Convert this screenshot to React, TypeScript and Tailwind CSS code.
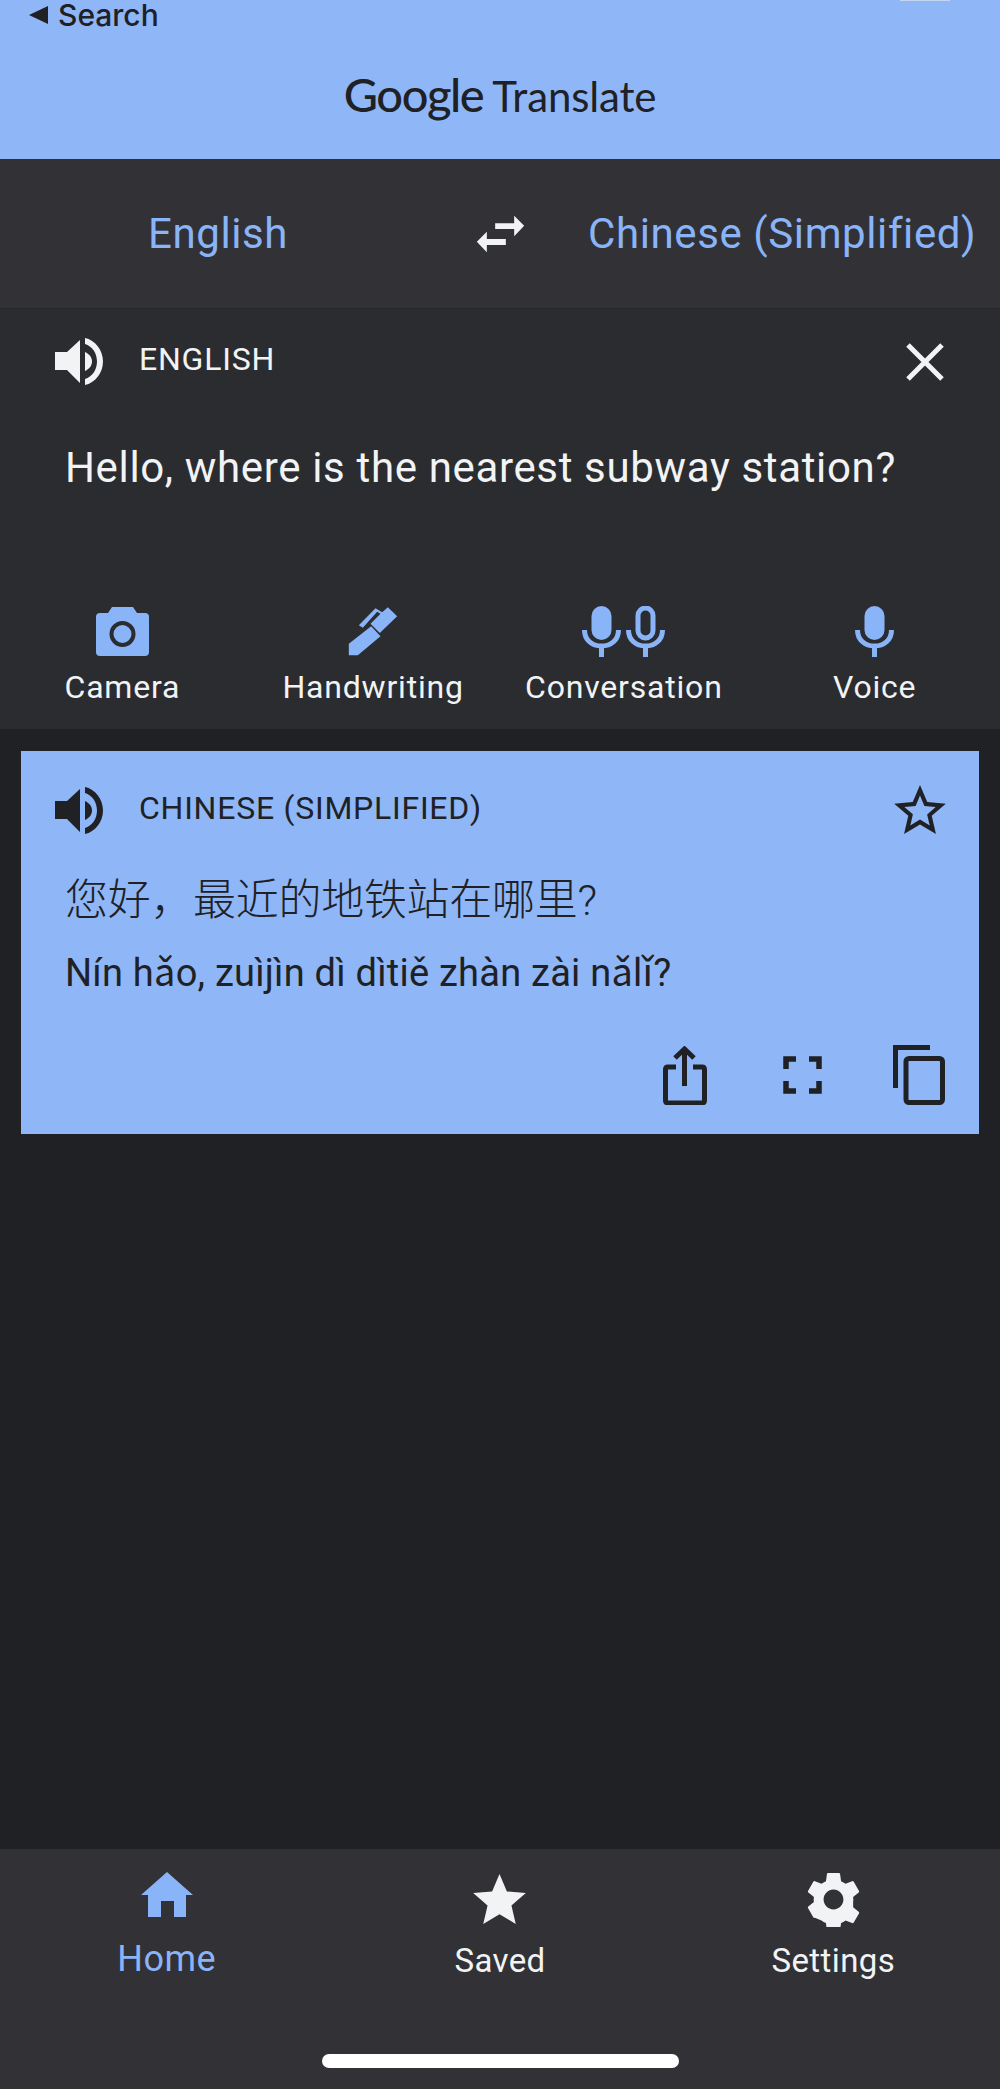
function Speaker({ className }: { className: string }) {
  return (
    <svg viewBox="0 0 48 47" className={className} fill="currentColor">
      <path d="M0 14H12L25 2V45L12 32H0Z" />
      <path d="M30 14C34 16 37 19 37 23.5C37 28 34 31 30 33Z" />
      <path d="M30 0C40 2 48 12 48 23.5S40 45 30 47V41C37 39 42 32 42 23.5S37 8 30 6Z" />
    </svg>
  );
}

function Mic({ outline }: { outline?: boolean }) {
  return (
    <svg viewBox="0 0 39 51" className="w-[39px] h-[51px] text-[#8ab4f8]">
      {outline ? (
        <rect x="12" y="2" width="15" height="30" rx="7.5" fill="none" stroke="currentColor" strokeWidth="5" />
      ) : (
        <rect x="9.5" y="0" width="20" height="34" rx="10" fill="currentColor" />
      )}
      <path d="M2.5 24C2.5 34 10 40 19.5 40S36.5 34 36.5 24" fill="none" stroke="currentColor" strokeWidth="5" />
      <rect x="17" y="39" width="5" height="12" fill="currentColor" />
    </svg>
  );
}

function Tool({ label, children }: { label: string; children: React.ReactNode }) {
  return (
    <div className="flex flex-col items-center">
      <div className="h-[51px] flex items-center justify-center gap-[5px]">{children}</div>
      <span className="mt-[15px] text-[32px] leading-[30px] tracking-[0.8px] text-[#f1f3f4] whitespace-nowrap">{label}</span>
    </div>
  );
}

function NavItem({ label, active, children }: { label: string; active?: boolean; children: React.ReactNode }) {
  return (
    <div className="flex flex-col items-center">
      <div className="h-[56px] flex items-center justify-center">{children}</div>
      <span className={active ? "mt-[15px] text-[36px] leading-[34px] tracking-[0.5px] text-[#8ab4f8]" : "mt-[17px] text-[33px] leading-[34px] tracking-[0.4px] text-[#f1f3f4]"}>
        {label}
      </span>
    </div>
  );
}

export default function App() {
  return (
    <div className="w-[1000px] h-[2089px] flex flex-col bg-[#202125] font-['Roboto','Noto_Sans_CJK_SC',sans-serif] overflow-hidden">
      {/* Header */}
      <header className="relative h-[159px] shrink-0 bg-[#8fb6f7] text-[#202125]">
        <div className="absolute top-0 right-[50px] w-[50px] h-px bg-[#c4d6f2]" />
        <div className="flex items-center pl-[29px] h-[30px] font-['Inter',sans-serif] text-[30px] font-medium leading-[30px]">
          <span className="mr-[10px] w-0 h-0 border-y-[9px] border-y-transparent border-r-[19px] border-r-[#202125]" />
          Search
        </div>
        <div className="flex justify-center items-baseline mt-[34px] font-['Lato',sans-serif] leading-[60px]">
          <span className="text-[47px] font-medium tracking-[-1.4px]">Google</span>
          <span className="ml-[9px] text-[42px] tracking-[-0.15px]">Translate</span>
        </div>
      </header>

      {/* Languages */}
      <div className="h-[150px] shrink-0 flex items-center pl-[148px] bg-[#323236] border-b border-[#27282c] text-[42px] tracking-[0.6px] text-[#8ab4f8]">
        <span className="w-[328px]">English</span>
        <svg viewBox="48 43 146 114" className="w-[49px] h-[38px] text-[#f1f3f4]" fill="currentColor">
          <path d="M105 68H162V45L192 75L162 107V85H105Z" />
          <path d="M137 115H80V93L50 123L80 155V133H137Z" />
        </svg>
        <span className="ml-[63px] whitespace-nowrap">Chinese (Simplified)</span>
      </div>

      {/* Input */}
      <section className="h-[420px] shrink-0 bg-[#2b2c30] text-[#f1f3f4]">
        <div className="flex items-center pt-[29px] pl-[55px] pr-[56px]">
          <Speaker className="w-[48px] h-[47px]" />
          <span className="ml-[36px] pb-[5px] text-[32px] leading-[37px] tracking-[0.8px]">ENGLISH</span>
          <svg viewBox="0 0 38 38" className="ml-auto w-[38px] h-[38px]" fill="none" stroke="currentColor" strokeWidth="5">
            <path d="M2 2L36 36M36 2L2 36" />
          </svg>
        </div>
        <p className="mt-[62px] pl-[65px] text-[42px] leading-[42px] tracking-[0.65px]">Hello, where is the nearest subway station?</p>
        <div className="-ml-[3px] mt-[117px] grid grid-cols-4">
          <Tool label="Camera">
            <svg viewBox="0 0 53 49" className="w-[53px] h-[49px] text-[#8ab4f8]" fill="currentColor">
              <path d="M16 0H37L41 6H49Q53 6 53 10V45Q53 49 49 49H4Q0 49 0 45V10Q0 6 4 6H12Z" />
              <circle cx="26.5" cy="27" r="11" fill="none" stroke="#2b2c30" strokeWidth="4" />
            </svg>
          </Tool>
          <Tool label="Handwriting">
            <svg viewBox="50 40 155 150" className="w-[52px] h-[50px] text-[#8ab4f8]" fill="currentColor">
              <path d="M55 185V150L122 98L150 128L82 185Z" />
              <path d="M135 44L155 56L172 41L200 68L148 118L120 90L150 60L140 54L97 102L85 95Z" />
            </svg>
          </Tool>
          <Tool label="Conversation">
            <Mic />
            <Mic outline />
          </Tool>
          <Tool label="Voice">
            <Mic />
          </Tool>
        </div>
      </section>

      {/* Translation card */}
      <div className="flex-1">
        <section className="mx-[21px] mt-[22px] h-[383px] bg-[#8fb6f7] text-[#202125]">
          <div className="flex items-center pt-[36px] pl-[34px] pr-[33px]">
            <Speaker className="w-[48px] h-[47px]" />
            <span className="ml-[36px] pb-[5px] text-[32px] leading-[37px] tracking-[0.75px] whitespace-nowrap">CHINESE (SIMPLIFIED)</span>
            <svg viewBox="2 2 20 19" className="ml-auto -mt-[2px] w-[52px] h-[49px]" fill="currentColor">
              <path d="M22 9.24l-7.19-.62L12 2 9.19 8.63 2 9.24l5.46 4.73L5.82 21 12 17.27 18.18 21l-1.63-7.03L22 9.24zM12 15.4l-3.76 2.27 1-4.28-3.32-2.88 4.38-.38L12 6.1l1.71 4.04 4.38.38-3.32 2.88 1 4.28L12 15.4z" />
            </svg>
          </div>
          <p className="mt-[41px] pl-[44px] text-[43px] font-light leading-[50px] tracking-[-0.3px]">您好，最近的地铁站在哪里?</p>
          <p className="mt-[28px] pl-[44px] text-[38px] leading-[40px] tracking-[0.23px]">Nín hǎo, zuìjìn dì dìtiě zhàn zài nǎlǐ?</p>
          <div className="mt-[52px] flex items-center justify-end pr-[34px] text-[#202125]">
            <svg viewBox="0 0 44 59" className="w-[44px] h-[59px]" fill="none" stroke="currentColor" strokeWidth="5">
              <path d="M13 21H5Q2.5 21 2.5 23.5V54Q2.5 57 5 57H39Q41.5 57 41.5 54V23.5Q41.5 21 39 21H30" />
              <path d="M21.5 4V40M12 12L21.5 3L31 12" />
            </svg>
            <svg viewBox="0 0 39 38" className="ml-[76px] w-[39px] h-[38px]" fill="none" stroke="currentColor" strokeWidth="5.5">
              <path d="M13 3H3V13M26 3H36V13M3 25V35H13M36 25V35H26" />
            </svg>
            <svg viewBox="0 0 52 60" className="ml-[71px] w-[52px] h-[60px]" fill="none" stroke="currentColor" strokeWidth="5">
              <path d="M2.5 43V2.5H37" />
              <rect x="13" y="13.5" width="36.5" height="44" rx="3" />
            </svg>
          </div>
        </section>
      </div>

      {/* Bottom nav */}
      <nav className="relative h-[240px] shrink-0 bg-[#323236] pt-[22px]">
        <div className="grid grid-cols-3">
          <NavItem label="Home" active>
            <svg viewBox="0 0 52 45" className="mb-[10px] w-[52px] h-[45px] text-[#8ab4f8]" fill="currentColor">
              <path d="M26 0L52 23H45V45H33V29H20V45H7V23H0Z" />
            </svg>
          </NavItem>
          <NavItem label="Saved">
            <svg viewBox="2 2 20 19" className="w-[53px] h-[50px] text-[#f1f3f4]" fill="currentColor">
              <path d="M12 17.27L18.18 21l-1.64-7.03L22 9.24l-7.19-.61L12 2 9.19 8.63 2 9.24l5.46 4.73L5.82 21z" />
            </svg>
          </NavItem>
          <NavItem label="Settings">
            <svg viewBox="2.6 2 18.8 20" className="w-[53px] h-[55px] text-[#f1f3f4]" fill="currentColor">
              <path d="M19.14 12.94c.04-.3.06-.61.06-.94 0-.32-.02-.64-.07-.94l2.03-1.58c.18-.14.23-.41.12-.61l-1.92-3.32c-.12-.22-.37-.29-.59-.22l-2.39.96c-.5-.38-1.03-.7-1.62-.94l-.36-2.54c-.04-.24-.24-.41-.48-.41h-3.84c-.24 0-.43.17-.47.41l-.36 2.54c-.59.24-1.13.57-1.62.94l-2.39-.96c-.22-.08-.47 0-.59.22L2.74 8.87c-.12.21-.08.47.12.61l2.03 1.58c-.05.3-.09.63-.09.94s.02.64.07.94l-2.03 1.58c-.18.14-.23.41-.12.61l1.92 3.32c.12.22.37.29.59.22l2.39.96c.5.38 1.03.7 1.62.94l.36 2.54c.05.24.24.41.48.41h3.84c.24 0 .44-.17.47-.41l.36-2.54c.59-.24 1.13-.56 1.62-.94l2.39.96c.22.08.47 0 .59-.22l1.92-3.32c.12-.22.07-.47-.12-.61l-2.01-1.58zM12 15.6c-1.98 0-3.6-1.62-3.6-3.6s1.62-3.6 3.6-3.6 3.6 1.62 3.6 3.6-1.62 3.6-3.6 3.6z" />
            </svg>
          </NavItem>
        </div>
        <div className="absolute left-[322px] bottom-[21px] w-[357px] h-[14px] rounded-[7px] bg-white" />
      </nav>
    </div>
  );
}
